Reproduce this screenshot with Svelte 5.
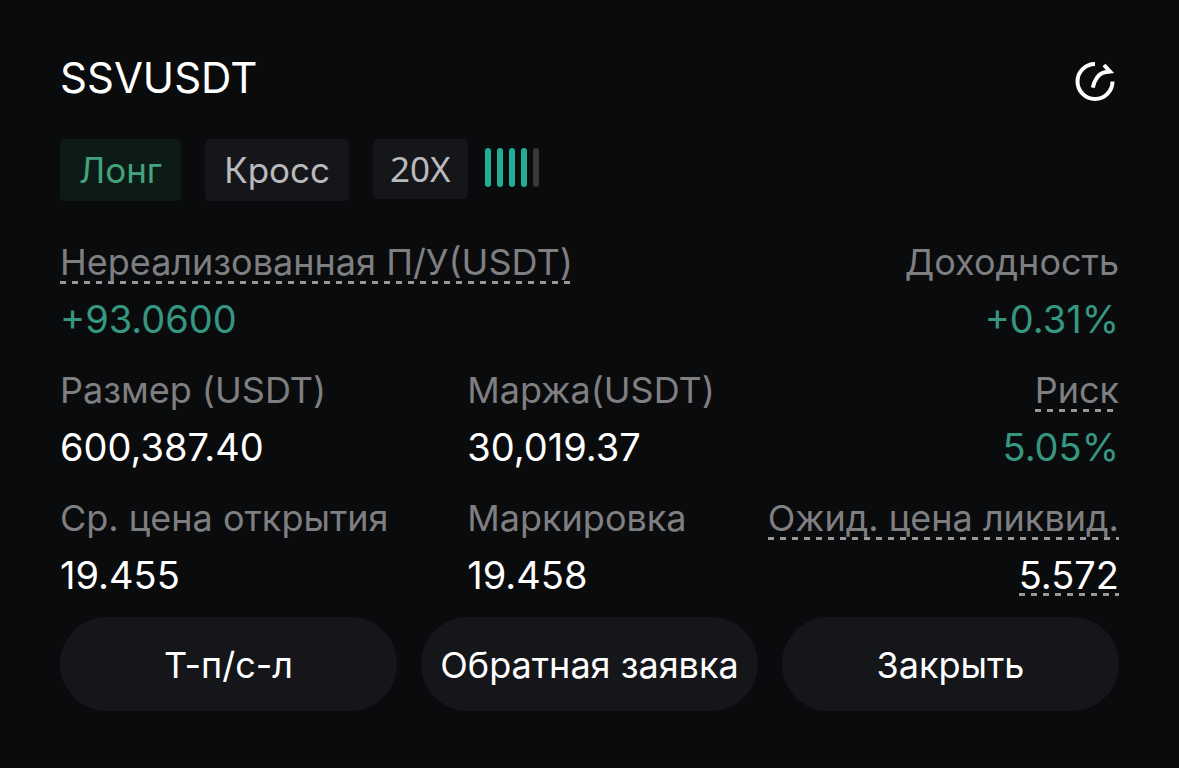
<script lang="ts">
    const symbol = "SSVUSDT";
    const leverage = "20X";
    const level = 4;

    const stats = [
        {
            label: "Нереализованная П/У(USDT)",
            value: "+93.0600",
            dashed: true,
            green: true,
            wide: true,
        },
        { label: "Доходность", value: "+0.31%", green: true, right: true },
        { label: "Размер (USDT)", value: "600,387.40" },
        { label: "Маржа(USDT)", value: "30,019.37" },
        {
            label: "Риск",
            value: "5.05%",
            dashed: true,
            green: true,
            right: true,
        },
        { label: "Ср. цена открытия", value: "19.455" },
        { label: "Маркировка", value: "19.458" },
        {
            label: "Ожид. цена ликвид.",
            value: "5.572",
            dashed: true,
            dashedValue: true,
            right: true,
        },
    ];

    const actions = ["Т-п/с-л", "Обратная заявка", "Закрыть"];
</script>

<main class="position">
    <header>
        <h1>{symbol}</h1>
        <button class="share" aria-label="Поделиться">
            <svg width="46" height="44" viewBox="0 0 46 44" fill="none">
                <path d="M22 4A17.5 17.5 0 1 0 39.5 21.5" />
                <path d="M19.8 27.7C21.2 20.5 25.5 13.2 32 12.2L37 11.6L31 5" />
            </svg>
        </button>
    </header>

    <div class="tags">
        <span class="tag long">Лонг</span>
        <span class="tag">Кросс</span>
        <span class="tag leverage">{leverage}</span>
        <div class="bars">
            {#each [1, 2, 3, 4, 5] as n}
                <i class:on={n <= level}></i>
            {/each}
        </div>
    </div>

    <dl class="stats">
        {#each stats as s}
            <div class="stat" class:wide={s.wide} class:right={s.right}>
                <dt class:dashed={s.dashed}>{s.label}</dt>
                <dd class:green={s.green} class:dashed={s.dashedValue}>
                    {s.value}
                </dd>
            </div>
        {/each}
    </dl>

    <div class="actions">
        {#each actions as action}
            <button>{action}</button>
        {/each}
    </div>
</main>

<style>
    :global(body) {
        background: #0a0b0d;
    }

    .position {
        padding: 52px 60px 56px;
        font-family: Inter, "Liberation Sans", sans-serif;
        color: #fff;
    }

    header {
        display: flex;
        justify-content: space-between;
        align-items: flex-end;
        height: 52px;
    }

    h1 {
        margin: 0;
        font-size: 42px;
        font-weight: 400;
        line-height: 52px;
    }

    button {
        border: none;
        color: inherit;
        font-family: inherit;
        cursor: pointer;
    }

    .share {
        display: flex;
        padding: 0;
        background: none;
    }

    .share path {
        stroke: #fff;
        stroke-width: 4;
    }

    .tags {
        display: flex;
        align-items: flex-start;
        gap: 24px;
        margin-top: 35px;
        height: 62px;
    }

    .tag {
        padding: 0 19px;
        border-radius: 5px;
        background: #15161a;
        color: #b9babd;
        font-size: 35px;
        line-height: 62px;
    }

    .long {
        background: #0d1b17;
        color: #42a37c;
    }

    .leverage {
        padding: 0 17px;
        font-family: "Noto Sans", sans-serif;
        line-height: 60px;
    }

    .bars {
        display: flex;
        gap: 6px;
        margin: 9px 0 0 -7px;
    }

    .bars i {
        width: 6px;
        height: 39px;
        border-radius: 3px;
        background: #37383a;
    }

    .bars .on {
        background: #22ae94;
    }

    .stats {
        display: grid;
        grid-template-columns: 15fr 11fr 13fr;
        row-gap: 32px;
        margin: 43px 0 0;
    }

    .stat {
        display: flex;
        flex-direction: column;
        align-items: flex-start;
        gap: 18px;
        white-space: nowrap;
    }

    .wide {
        grid-column: span 2;
    }

    .right {
        align-items: flex-end;
    }

    dt,
    dd {
        margin: 0;
        padding-bottom: 4px;
    }

    dt {
        color: #7f7f81;
        font-size: 36px;
        line-height: 36px;
    }

    dd {
        font-size: 38px;
        line-height: 34px;
    }

    .green {
        color: #369781;
    }

    .dashed {
        background: repeating-linear-gradient(
                90deg,
                #98989a 0 6px,
                transparent 6px 12px
            )
            left bottom / 100% 3px no-repeat;
    }

    .actions {
        display: grid;
        grid-template-columns: repeat(3, 1fr);
        gap: 24px;
        margin-top: 21px;
    }

    .actions button {
        height: 94px;
        padding: 2px 0 0;
        border-radius: 47px;
        background: #15161a;
        font-size: 36px;
        white-space: nowrap;
    }
</style>
